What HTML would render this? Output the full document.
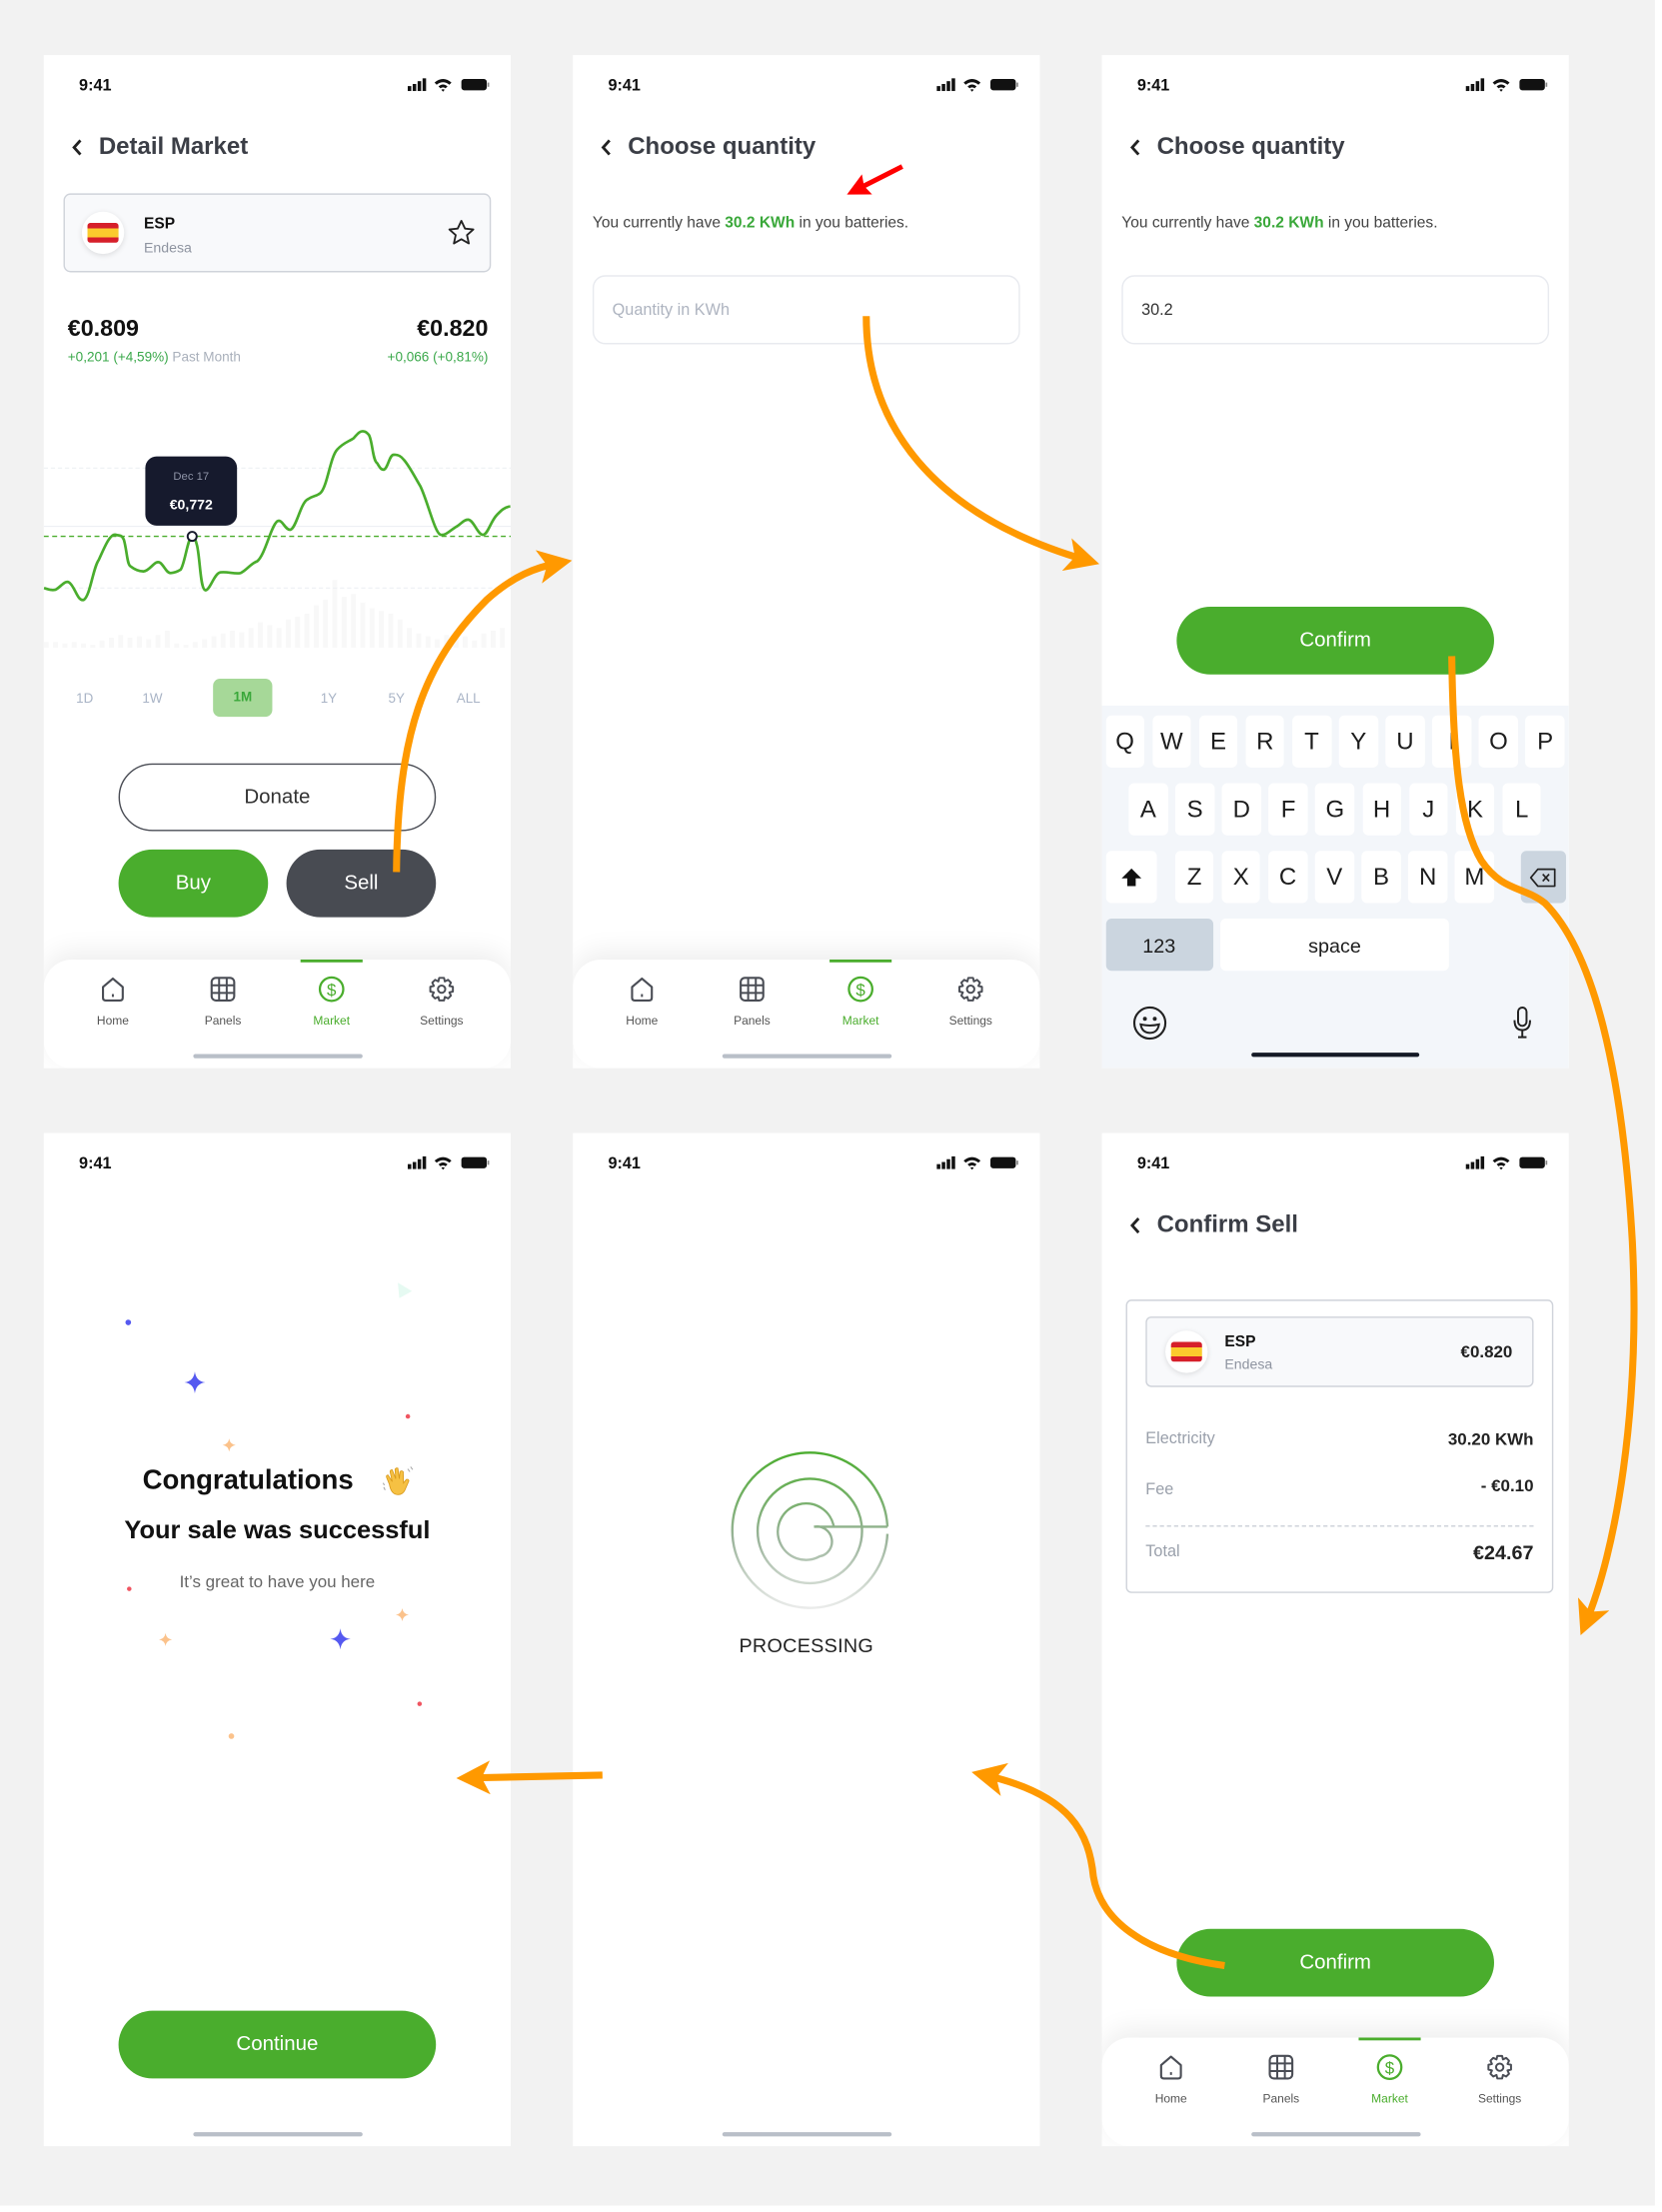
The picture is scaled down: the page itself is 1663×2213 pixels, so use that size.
<!DOCTYPE html>
<html><head><meta charset="utf-8">
<style>
*{box-sizing:border-box;margin:0;padding:0}
html,body{width:1663px;height:2213px;background:#fff;overflow:hidden}
#w{position:absolute;left:0;top:0;width:1178px;height:1567px;transform:scale(1.4117);transform-origin:0 0;font-family:"Liberation Sans",sans-serif}
#bg{position:absolute;left:0;top:0;width:1173px;height:1563px;background:#f2f2f2}
.ph{position:absolute;width:331px;height:718px;background:#fff;overflow:hidden}
.a{position:absolute}
.time{position:absolute;left:25px;top:15.5px;font-size:11.5px;font-weight:bold;color:#111}
.sb{position:absolute;left:256px;top:15px}
.hd{position:absolute;left:19px;top:54px;height:22px;font-size:17px;font-weight:bold;color:#3b3e46;line-height:22px}
.hd svg{position:absolute;left:0;top:5px}
.hd span{position:absolute;left:20px;white-space:nowrap}
.nav{position:absolute;left:0;top:641px;width:331px;height:77px;background:#fff;border-radius:20px;box-shadow:0 -6px 18px rgba(0,0,0,.07)}
.nav .it{position:absolute;top:11px;width:60px;margin-left:-30px;text-align:center;font-size:8.5px;color:#555}
.nav .it svg{display:block;margin:0 auto 7px}
.nav .ab{position:absolute;left:182px;top:0;width:44px;height:2px;background:#4aad2d}
.hb{position:absolute;left:106px;width:120px;height:3px;border-radius:2px;background:#b9bfc8}
.btn{position:absolute;height:48px;border-radius:24px;background:#4aad2d;color:#fff;font-size:14.5px;text-align:center;line-height:48px}
.txt{position:absolute;left:14px;top:113px;font-size:11px;color:#444;white-space:nowrap}
.txt b{color:#3aa83a}
.inp{position:absolute;left:14px;top:156px;width:303px;height:49px;border:1px solid #e8eaef;border-radius:9px;font-size:11.5px;line-height:49px;padding-left:13px}
.k{position:absolute;height:37px;width:27.7px;background:#fff;border-radius:4px;text-align:center;line-height:38px;font-size:17px;color:#1c1c1c}
.flag{position:absolute;width:30px;height:30px;border-radius:50%;background:#fff;box-shadow:0 1px 4px rgba(0,0,0,.12)}
.flag i{position:absolute;left:4px;top:8px;width:22px;height:14px;border-radius:2px;background:linear-gradient(#d61f2a 0 27%,#fbcb2d 27% 73%,#d61f2a 73%)}
.tf{position:absolute;top:451px;font-size:9.5px;color:#a9b4c6;width:30px;margin-left:-15px;text-align:center}
</style></head><body>
<div id="w">
<div id="bg"></div>

<!-- PHONE 1 -->
<div class="ph" style="left:31px;top:39px">
 <div class="time">9:41</div>
 <svg class="sb" width="62" height="12" viewBox="0 0 62 12"><rect x="2" y="7" width="2.5" height="3.5" fill="#111"/><rect x="5.5" y="5.5" width="2.5" height="5" fill="#111"/><rect x="9" y="3.5" width="2.5" height="7" fill="#111"/><rect x="12.5" y="1.5" width="2.5" height="9" fill="#111"/><path d="M21,4.5 Q27,-0.5 33,4.5 L31.5,6 Q27,2.5 22.5,6Z M23.8,7.2 Q27,4.5 30.2,7.2 L28.8,8.6 Q27,7.2 25.2,8.6Z M27,11 L25.8,9.6 Q27,8.8 28.2,9.6Z" fill="#111"/><rect x="40" y="2" width="18" height="8" rx="2" fill="#111"/><rect x="58.5" y="4.5" width="1.2" height="3" fill="#888"/></svg>
 <div class="hd"><svg width="10" height="13" viewBox="0 0 10 13"><path d="M7,1.5 L2.5,6.5 L7,11.5" stroke="#222" stroke-width="2" fill="none"/></svg><span>Detail Market</span></div>
 <div class="a" style="left:14px;top:98px;width:303px;height:56px;background:#f8f9fb;border:1px solid #cfd3da;border-radius:5px">
  <div class="flag" style="left:12px;top:12px"><i></i></div>
  <div class="a" style="left:56px;top:15px;font-size:11px;font-weight:bold;color:#111">ESP</div>
  <div class="a" style="left:56px;top:33px;font-size:10px;color:#8e94a0">Endesa</div>
  <svg class="a" style="left:271px;top:17px" width="20" height="20" viewBox="0 0 20 20"><path d="M10,1.5 L12.6,7 L18.5,7.6 L14,11.6 L15.3,17.5 L10,14.5 L4.7,17.5 L6,11.6 L1.5,7.6 L7.4,7Z" fill="none" stroke="#222" stroke-width="1.3" stroke-linejoin="round"/></svg>
 </div>
 <div class="a" style="left:17px;top:185px;font-size:16.5px;font-weight:bold;color:#111">€0.809</div>
 <div class="a" style="right:16px;top:185px;font-size:16.5px;font-weight:bold;color:#111">€0.820</div>
 <div class="a" style="left:17px;top:209px;font-size:9.6px;color:#3aa84a;white-space:nowrap">+0,201 (+4,59%) <span style="color:#a9b0bb">Past Month</span></div>
 <div class="a" style="right:16px;top:209px;font-size:9.6px;color:#3aa84a">+0,066 (+0,81%)</div>
 <div class="tf" style="left:29px">1D</div>
 <div class="tf" style="left:77px">1W</div>
 <div class="a" style="left:120px;top:442px;width:42px;height:27px;border-radius:5px;background:#a6d898;color:#3aa83a;font-size:9.5px;font-weight:bold;text-align:center;line-height:27px">1M</div>
 <div class="tf" style="left:202px">1Y</div>
 <div class="tf" style="left:250px">5Y</div>
 <div class="tf" style="left:301px">ALL</div>
 <div class="a" style="left:53px;top:502px;width:225px;height:48px;border:1px solid #4a4d55;border-radius:24px;text-align:center;line-height:46px;font-size:14.5px;color:#333">Donate</div>
 <div class="btn" style="left:53px;top:563px;width:106px">Buy</div>
 <div class="btn" style="left:172px;top:563px;width:106px;background:#484b52">Sell</div>
 <div class="nav"><div class="ab"></div>
  <div class="it" style="left:49px"><svg width="20" height="20" viewBox="0 0 20 20"><path d="M3,8.5 L10,2.5 L17,8.5 V16 Q17,18 15,18 H5 Q3,18 3,16Z" fill="none" stroke="#4a4d55" stroke-width="1.5" stroke-linejoin="round"/><path d="M10,13.5 V15.5" stroke="#4a4d55" stroke-width="1.4"/></svg>Home</div>
  <div class="it" style="left:127px"><svg width="20" height="20" viewBox="0 0 20 20"><rect x="2" y="2" width="16" height="16" rx="3" fill="none" stroke="#4a4d55" stroke-width="1.5"/><path d="M7.3,2V18M12.7,2V18M2,7.3H18M2,12.7H18" stroke="#4a4d55" stroke-width="1.4"/></svg>Panels</div>
  <div class="it" style="left:204px;color:#4aad2d"><svg width="20" height="20" viewBox="0 0 20 20"><circle cx="10" cy="10" r="8.3" fill="none" stroke="#4aad2d" stroke-width="1.6"/><text x="10" y="14.5" font-size="12" text-anchor="middle" fill="#4aad2d" font-family="Liberation Sans">$</text></svg>Market</div>
  <div class="it" style="left:282px"><svg width="20" height="20" viewBox="0 0 20 20"><path d="M8.3,2 H11.7 L12.3,4.5 L14.6,3.4 L16.6,5.4 L15.5,7.7 L18,8.3 V11.7 L15.5,12.3 L16.6,14.6 L14.6,16.6 L12.3,15.5 L11.7,18 H8.3 L7.7,15.5 L5.4,16.6 L3.4,14.6 L4.5,12.3 L2,11.7 V8.3 L4.5,7.7 L3.4,5.4 L5.4,3.4 L7.7,4.5Z" fill="none" stroke="#4a4d55" stroke-width="1.4" stroke-linejoin="round"/><circle cx="10" cy="10" r="2.6" fill="none" stroke="#4a4d55" stroke-width="1.4"/></svg>Settings</div>
  <div class="hb" style="top:67px"></div>
 </div>
</div>

<!-- PHONE 2 -->
<div class="ph" style="left:406px;top:39px">
 <div class="time">9:41</div>
 <svg class="sb" width="62" height="12" viewBox="0 0 62 12"><rect x="2" y="7" width="2.5" height="3.5" fill="#111"/><rect x="5.5" y="5.5" width="2.5" height="5" fill="#111"/><rect x="9" y="3.5" width="2.5" height="7" fill="#111"/><rect x="12.5" y="1.5" width="2.5" height="9" fill="#111"/><path d="M21,4.5 Q27,-0.5 33,4.5 L31.5,6 Q27,2.5 22.5,6Z M23.8,7.2 Q27,4.5 30.2,7.2 L28.8,8.6 Q27,7.2 25.2,8.6Z M27,11 L25.8,9.6 Q27,8.8 28.2,9.6Z" fill="#111"/><rect x="40" y="2" width="18" height="8" rx="2" fill="#111"/><rect x="58.5" y="4.5" width="1.2" height="3" fill="#888"/></svg>
 <div class="hd"><svg width="10" height="13" viewBox="0 0 10 13"><path d="M7,1.5 L2.5,6.5 L7,11.5" stroke="#222" stroke-width="2" fill="none"/></svg><span>Choose quantity</span></div>
 <div class="txt">You currently have <b>30.2 KWh</b> in you batteries.</div>
 <div class="inp" style="color:#aeb4c0">Quantity in KWh</div>
 <div class="nav"><div class="ab"></div>
  <div class="it" style="left:49px"><svg width="20" height="20" viewBox="0 0 20 20"><path d="M3,8.5 L10,2.5 L17,8.5 V16 Q17,18 15,18 H5 Q3,18 3,16Z" fill="none" stroke="#4a4d55" stroke-width="1.5" stroke-linejoin="round"/><path d="M10,13.5 V15.5" stroke="#4a4d55" stroke-width="1.4"/></svg>Home</div>
  <div class="it" style="left:127px"><svg width="20" height="20" viewBox="0 0 20 20"><rect x="2" y="2" width="16" height="16" rx="3" fill="none" stroke="#4a4d55" stroke-width="1.5"/><path d="M7.3,2V18M12.7,2V18M2,7.3H18M2,12.7H18" stroke="#4a4d55" stroke-width="1.4"/></svg>Panels</div>
  <div class="it" style="left:204px;color:#4aad2d"><svg width="20" height="20" viewBox="0 0 20 20"><circle cx="10" cy="10" r="8.3" fill="none" stroke="#4aad2d" stroke-width="1.6"/><text x="10" y="14.5" font-size="12" text-anchor="middle" fill="#4aad2d" font-family="Liberation Sans">$</text></svg>Market</div>
  <div class="it" style="left:282px"><svg width="20" height="20" viewBox="0 0 20 20"><path d="M8.3,2 H11.7 L12.3,4.5 L14.6,3.4 L16.6,5.4 L15.5,7.7 L18,8.3 V11.7 L15.5,12.3 L16.6,14.6 L14.6,16.6 L12.3,15.5 L11.7,18 H8.3 L7.7,15.5 L5.4,16.6 L3.4,14.6 L4.5,12.3 L2,11.7 V8.3 L4.5,7.7 L3.4,5.4 L5.4,3.4 L7.7,4.5Z" fill="none" stroke="#4a4d55" stroke-width="1.4" stroke-linejoin="round"/><circle cx="10" cy="10" r="2.6" fill="none" stroke="#4a4d55" stroke-width="1.4"/></svg>Settings</div>
  <div class="hb" style="top:67px"></div>
 </div>
</div>

<!-- PHONE 3 -->
<div class="ph" style="left:781px;top:39px">
 <div class="time">9:41</div>
 <svg class="sb" width="62" height="12" viewBox="0 0 62 12"><rect x="2" y="7" width="2.5" height="3.5" fill="#111"/><rect x="5.5" y="5.5" width="2.5" height="5" fill="#111"/><rect x="9" y="3.5" width="2.5" height="7" fill="#111"/><rect x="12.5" y="1.5" width="2.5" height="9" fill="#111"/><path d="M21,4.5 Q27,-0.5 33,4.5 L31.5,6 Q27,2.5 22.5,6Z M23.8,7.2 Q27,4.5 30.2,7.2 L28.8,8.6 Q27,7.2 25.2,8.6Z M27,11 L25.8,9.6 Q27,8.8 28.2,9.6Z" fill="#111"/><rect x="40" y="2" width="18" height="8" rx="2" fill="#111"/><rect x="58.5" y="4.5" width="1.2" height="3" fill="#888"/></svg>
 <div class="hd"><svg width="10" height="13" viewBox="0 0 10 13"><path d="M7,1.5 L2.5,6.5 L7,11.5" stroke="#222" stroke-width="2" fill="none"/></svg><span>Choose quantity</span></div>
 <div class="txt">You currently have <b>30.2 KWh</b> in you batteries.</div>
 <div class="inp" style="color:#333">30.2</div>
 <div class="btn" style="left:53px;top:391px;width:225px">Confirm</div>
 <div class="a" style="left:0;top:461px;width:331px;height:257px;background:#f3f6fa">
  <div class="k" style="left:2.5px;top:7px">Q</div><div class="k" style="left:35.6px;top:7px">W</div><div class="k" style="left:68.7px;top:7px">E</div><div class="k" style="left:101.8px;top:7px">R</div><div class="k" style="left:134.9px;top:7px">T</div><div class="k" style="left:168px;top:7px">Y</div><div class="k" style="left:201.1px;top:7px">U</div><div class="k" style="left:234.2px;top:7px">I</div><div class="k" style="left:267.3px;top:7px">O</div><div class="k" style="left:300.4px;top:7px">P</div>
  <div class="k" style="left:19px;top:55px">A</div><div class="k" style="left:52.1px;top:55px">S</div><div class="k" style="left:85.2px;top:55px">D</div><div class="k" style="left:118.3px;top:55px">F</div><div class="k" style="left:151.4px;top:55px">G</div><div class="k" style="left:184.5px;top:55px">H</div><div class="k" style="left:217.6px;top:55px">J</div><div class="k" style="left:250.7px;top:55px">K</div><div class="k" style="left:283.8px;top:55px">L</div>
  <div class="k" style="left:2.5px;top:103px;width:36.5px"><svg width="16" height="16" viewBox="0 0 16 16" style="margin-top:11px"><path d="M8,1.5 L15,8.5 H11 V14 H5 V8.5 H1Z" fill="#111"/></svg></div>
  <div class="k" style="left:51.7px;top:103px">Z</div><div class="k" style="left:84.8px;top:103px">X</div><div class="k" style="left:117.9px;top:103px">C</div><div class="k" style="left:151px;top:103px">V</div><div class="k" style="left:184.1px;top:103px">B</div><div class="k" style="left:217.2px;top:103px">N</div><div class="k" style="left:250.3px;top:103px">M</div>
  <div class="k" style="left:296.5px;top:103px;width:32.5px;background:#cbd5df"><svg width="20" height="14" viewBox="0 0 20 14" style="margin-top:12px"><path d="M6,1 H18 V13 H6 L1,7Z" fill="none" stroke="#222" stroke-width="1.2" stroke-linejoin="round"/><path d="M9.5,4.5 L14,9.5 M14,4.5 L9.5,9.5" stroke="#222" stroke-width="1.2"/></svg></div>
  <div class="k" style="left:2.5px;top:151px;width:76px;background:#cbd5df;font-size:14px">123</div>
  <div class="k" style="left:84px;top:151px;width:162px;font-size:14px">space</div>
  <svg class="a" style="left:21px;top:212px" width="26" height="26" viewBox="0 0 26 26"><circle cx="13" cy="13" r="11" fill="none" stroke="#222" stroke-width="1.5"/><circle cx="9.5" cy="10" r="1.4" fill="#222"/><circle cx="16.5" cy="10" r="1.4" fill="#222"/><path d="M6.5,14 Q13,15.5 19.5,14 Q18.5,20 13,20 Q7.5,20 6.5,14Z" fill="none" stroke="#222" stroke-width="1.4"/></svg>
  <svg class="a" style="left:290px;top:212px" width="16" height="26" viewBox="0 0 16 26"><rect x="5" y="2" width="6" height="13" rx="3" fill="none" stroke="#222" stroke-width="1.4"/><path d="M2.5,11 Q2.5,18 8,18 Q13.5,18 13.5,11 M8,18 V23 M5,23 H11" fill="none" stroke="#222" stroke-width="1.4"/></svg>
  <div class="a" style="left:106px;top:246px;width:119px;height:3px;border-radius:2px;background:#151a26"></div>
 </div>
</div>

<!-- PHONE 4 -->
<div class="ph" style="left:31px;top:803px">
 <div class="time">9:41</div>
 <svg class="sb" width="62" height="12" viewBox="0 0 62 12"><rect x="2" y="7" width="2.5" height="3.5" fill="#111"/><rect x="5.5" y="5.5" width="2.5" height="5" fill="#111"/><rect x="9" y="3.5" width="2.5" height="7" fill="#111"/><rect x="12.5" y="1.5" width="2.5" height="9" fill="#111"/><path d="M21,4.5 Q27,-0.5 33,4.5 L31.5,6 Q27,2.5 22.5,6Z M23.8,7.2 Q27,4.5 30.2,7.2 L28.8,8.6 Q27,7.2 25.2,8.6Z M27,11 L25.8,9.6 Q27,8.8 28.2,9.6Z" fill="#111"/><rect x="40" y="2" width="18" height="8" rx="2" fill="#111"/><rect x="58.5" y="4.5" width="1.2" height="3" fill="#888"/></svg>
 <div class="a" style="left:70px;top:235px;font-size:19.5px;font-weight:bold;color:#111;white-space:nowrap">Congratulations</div>
 <svg class="a" style="left:239px;top:235px" width="24" height="24" viewBox="0 0 24 24"><path d="M6,14 L4,9 Q3.5,7.5 5,7.3 L8,12 L6.5,5 Q6.5,3.5 8,3.7 L10.5,10 L10,3.5 Q10.5,2 12,2.5 L13,10 L13.5,5 Q14.5,3.8 15.8,5 L16,13 L18,10.5 Q19.5,10 19.8,11.5 L17,18 Q15,22 10.5,21 Q7,20 6,14Z" fill="#f6c143" stroke="#d99a1c" stroke-width=".6"/><path d="M2,16 L3,18 M1.5,13 L2.5,14.5 M19,3 L20.5,5 M21,1.5 L22.5,3.5" stroke="#aaa" stroke-width=".8"/></svg>
 <div class="a" style="left:0;top:271px;width:331px;text-align:center;font-size:18px;font-weight:bold;color:#111;white-space:nowrap">Your sale was successful</div>
 <div class="a" style="left:0;top:311px;width:331px;text-align:center;font-size:12px;color:#666">It’s great to have you here</div>
 <div class="btn" style="left:53px;top:622px;width:225px">Continue</div>
 <div class="hb" style="top:708px"></div>
</div>

<!-- PHONE 5 -->
<div class="ph" style="left:406px;top:803px">
 <div class="time">9:41</div>
 <svg class="sb" width="62" height="12" viewBox="0 0 62 12"><rect x="2" y="7" width="2.5" height="3.5" fill="#111"/><rect x="5.5" y="5.5" width="2.5" height="5" fill="#111"/><rect x="9" y="3.5" width="2.5" height="7" fill="#111"/><rect x="12.5" y="1.5" width="2.5" height="9" fill="#111"/><path d="M21,4.5 Q27,-0.5 33,4.5 L31.5,6 Q27,2.5 22.5,6Z M23.8,7.2 Q27,4.5 30.2,7.2 L28.8,8.6 Q27,7.2 25.2,8.6Z M27,11 L25.8,9.6 Q27,8.8 28.2,9.6Z" fill="#111"/><rect x="40" y="2" width="18" height="8" rx="2" fill="#111"/><rect x="58.5" y="4.5" width="1.2" height="3" fill="#888"/></svg>
 <div class="a" style="left:0;top:355px;width:331px;text-align:center;font-size:14px;color:#222;letter-spacing:.2px">PROCESSING</div>
 <div class="hb" style="top:708px"></div>
</div>

<!-- PHONE 6 -->
<div class="ph" style="left:781px;top:803px">
 <div class="time">9:41</div>
 <svg class="sb" width="62" height="12" viewBox="0 0 62 12"><rect x="2" y="7" width="2.5" height="3.5" fill="#111"/><rect x="5.5" y="5.5" width="2.5" height="5" fill="#111"/><rect x="9" y="3.5" width="2.5" height="7" fill="#111"/><rect x="12.5" y="1.5" width="2.5" height="9" fill="#111"/><path d="M21,4.5 Q27,-0.5 33,4.5 L31.5,6 Q27,2.5 22.5,6Z M23.8,7.2 Q27,4.5 30.2,7.2 L28.8,8.6 Q27,7.2 25.2,8.6Z M27,11 L25.8,9.6 Q27,8.8 28.2,9.6Z" fill="#111"/><rect x="40" y="2" width="18" height="8" rx="2" fill="#111"/><rect x="58.5" y="4.5" width="1.2" height="3" fill="#888"/></svg>
 <div class="hd"><svg width="10" height="13" viewBox="0 0 10 13"><path d="M7,1.5 L2.5,6.5 L7,11.5" stroke="#222" stroke-width="2" fill="none"/></svg><span>Confirm Sell</span></div>
 <div class="a" style="left:17px;top:118px;width:303px;height:208px;border:1px solid #cfd3da;border-radius:4px">
  <div class="a" style="left:13px;top:11px;width:275px;height:50px;background:#f8f9fb;border:1px solid #cfd3da;border-radius:4px">
   <div class="flag" style="left:13px;top:9px"><i></i></div>
   <div class="a" style="left:55px;top:11px;font-size:11px;font-weight:bold;color:#111">ESP</div>
   <div class="a" style="left:55px;top:28px;font-size:10px;color:#8e94a0">Endesa</div>
   <div class="a" style="right:14px;top:17px;font-size:12px;font-weight:bold;color:#222">€0.820</div>
  </div>
  <div class="a" style="left:13px;top:92px;font-size:11.5px;color:#9aa0ab">Electricity</div>
  <div class="a" style="right:13px;top:91px;font-size:12px;font-weight:bold;color:#222">30.20 KWh</div>
  <div class="a" style="left:13px;top:128px;font-size:11.5px;color:#9aa0ab">Fee</div>
  <div class="a" style="right:13px;top:124px;font-size:12px;font-weight:bold;color:#222">- €0.10</div>
  <div class="a" style="left:13px;top:159px;width:275px;border-top:1px dashed #cfd3da"></div>
  <div class="a" style="left:13px;top:172px;font-size:11.5px;color:#9aa0ab">Total</div>
  <div class="a" style="right:13px;top:170px;font-size:14px;font-weight:bold;color:#222">€24.67</div>
 </div>
 <div class="btn" style="left:53px;top:564px;width:225px">Confirm</div>
 <div class="nav"><div class="ab"></div>
  <div class="it" style="left:49px"><svg width="20" height="20" viewBox="0 0 20 20"><path d="M3,8.5 L10,2.5 L17,8.5 V16 Q17,18 15,18 H5 Q3,18 3,16Z" fill="none" stroke="#4a4d55" stroke-width="1.5" stroke-linejoin="round"/><path d="M10,13.5 V15.5" stroke="#4a4d55" stroke-width="1.4"/></svg>Home</div>
  <div class="it" style="left:127px"><svg width="20" height="20" viewBox="0 0 20 20"><rect x="2" y="2" width="16" height="16" rx="3" fill="none" stroke="#4a4d55" stroke-width="1.5"/><path d="M7.3,2V18M12.7,2V18M2,7.3H18M2,12.7H18" stroke="#4a4d55" stroke-width="1.4"/></svg>Panels</div>
  <div class="it" style="left:204px;color:#4aad2d"><svg width="20" height="20" viewBox="0 0 20 20"><circle cx="10" cy="10" r="8.3" fill="none" stroke="#4aad2d" stroke-width="1.6"/><text x="10" y="14.5" font-size="12" text-anchor="middle" fill="#4aad2d" font-family="Liberation Sans">$</text></svg>Market</div>
  <div class="it" style="left:282px"><svg width="20" height="20" viewBox="0 0 20 20"><path d="M8.3,2 H11.7 L12.3,4.5 L14.6,3.4 L16.6,5.4 L15.5,7.7 L18,8.3 V11.7 L15.5,12.3 L16.6,14.6 L14.6,16.6 L12.3,15.5 L11.7,18 H8.3 L7.7,15.5 L5.4,16.6 L3.4,14.6 L4.5,12.3 L2,11.7 V8.3 L4.5,7.7 L3.4,5.4 L5.4,3.4 L7.7,4.5Z" fill="none" stroke="#4a4d55" stroke-width="1.4" stroke-linejoin="round"/><circle cx="10" cy="10" r="2.6" fill="none" stroke="#4a4d55" stroke-width="1.4"/></svg>Settings</div>
  <div class="hb" style="top:67px"></div>
 </div>
</div>

<!-- OVERLAY -->
<svg class="a" style="left:0;top:0" width="1178" height="1567" viewBox="0 0 1178 1567">
 <defs>
  <marker id="ao" viewBox="0 0 10 10" refX="6" refY="5" markerWidth="24" markerHeight="24" markerUnits="userSpaceOnUse" orient="auto"><path d="M0,0 L10,5 L0,10 L2.5,5Z" fill="#ff9900"/></marker>
  <marker id="ar" viewBox="0 0 10 10" refX="6" refY="5" markerWidth="16" markerHeight="16" markerUnits="userSpaceOnUse" orient="auto"><path d="M0,0 L10,5 L0,10 L1.5,5Z" fill="#f00"/></marker>
  <linearGradient id="sg" gradientUnits="userSpaceOnUse" x1="0" y1="1028" x2="0" y2="1142"><stop offset="0" stop-color="#4aad2d"/><stop offset=".55" stop-color="#9ab39a"/><stop offset="1" stop-color="#eeeeee"/></linearGradient>
  <clipPath id="c1"><rect x="31" y="250" width="331" height="220"/></clipPath>
 </defs>
 <g clip-path="url(#c1)">
  <g fill="#f8f8f8">
   <rect x="31" y="455" width="3.5" height="4"/><rect x="37.6" y="455" width="3.5" height="4"/><rect x="44.2" y="456" width="3.5" height="3"/><rect x="50.8" y="455" width="3.5" height="4"/><rect x="57.4" y="456" width="3.5" height="3"/><rect x="64" y="457" width="3.5" height="2"/><rect x="70.6" y="454" width="3.5" height="5"/><rect x="77.2" y="452" width="3.5" height="7"/><rect x="83.8" y="450" width="3.5" height="9"/><rect x="90.4" y="452" width="3.5" height="7"/><rect x="97" y="451" width="3.5" height="8"/><rect x="103.6" y="453" width="3.5" height="6"/><rect x="110.2" y="450" width="3.5" height="9"/><rect x="116.8" y="447" width="3.5" height="12"/><rect x="123.4" y="456" width="3.5" height="3"/><rect x="130" y="457" width="3.5" height="2"/><rect x="136.6" y="455" width="3.5" height="4"/><rect x="143.2" y="453" width="3.5" height="6"/><rect x="149.8" y="451" width="3.5" height="8"/><rect x="156.4" y="449" width="3.5" height="10"/><rect x="163" y="447" width="3.5" height="12"/><rect x="169.6" y="448" width="3.5" height="11"/><rect x="176.2" y="445" width="3.5" height="14"/><rect x="182.8" y="441" width="3.5" height="18"/><rect x="189.4" y="443" width="3.5" height="16"/><rect x="196" y="445" width="3.5" height="14"/><rect x="202.6" y="439" width="3.5" height="20"/><rect x="209.2" y="437" width="3.5" height="22"/><rect x="215.8" y="435" width="3.5" height="24"/><rect x="222.4" y="429" width="3.5" height="30"/><rect x="229" y="425" width="3.5" height="34"/><rect x="235.6" y="411" width="3.5" height="48"/><rect x="242.2" y="423" width="3.5" height="36"/><rect x="248.8" y="421" width="3.5" height="38"/><rect x="255.4" y="427" width="3.5" height="32"/><rect x="262" y="431" width="3.5" height="28"/><rect x="268.6" y="433" width="3.5" height="26"/><rect x="275.2" y="435" width="3.5" height="24"/><rect x="281.8" y="439" width="3.5" height="20"/><rect x="288.4" y="445" width="3.5" height="14"/><rect x="295" y="449" width="3.5" height="10"/><rect x="301.6" y="451" width="3.5" height="8"/><rect x="308.2" y="453" width="3.5" height="6"/><rect x="314.8" y="450" width="3.5" height="9"/><rect x="321.4" y="447" width="3.5" height="12"/><rect x="328" y="451" width="3.5" height="8"/><rect x="334.6" y="454" width="3.5" height="5"/><rect x="341.2" y="449" width="3.5" height="10"/><rect x="347.8" y="447" width="3.5" height="12"/><rect x="354.4" y="445" width="3.5" height="14"/>
  </g>
  <path d="M31,331.7H362M31,416.7H362" stroke="#edf0f4" stroke-width=".8" stroke-dasharray="3 2"/>
  <path d="M31,373H362" stroke="#edf0f4" stroke-width=".8"/>
  <path d="M31,380.1H362" stroke="#4aad2d" stroke-width="1" stroke-dasharray="3.5 2.5"/>
  <path d="M31.2,416.7 C35,418 37,418.5 39.4,417.9 C43,416 46,411 48.9,412.7 C53,415 55,427 59.5,425 C64,422 66,402 70.1,396.6 C74,388 78,378 81.9,378.9 C86,380 86,379 87.8,382.5 C90,390 90,400 92.5,401.3 C96,404 99,405 102,404.9 C107,404 110,396 113.8,399 C117,402 118,406 120.9,406.1 C124,406 126,405 128,403.7 C131,400 133,381 136.2,380.1 C138,380 138.5,382 139.8,387.2 C142,398 142,418 145.7,418.3 C149,418 152,406 156.3,405.6 C162,405 166,407 170.5,406.1 C175,404 178,399 182.3,397.8 C188,393 192,373 196.4,369.5 C200,367 202,376 205.9,375.4 C210,374 213,357 217.7,354.1 C222,351 224,352 227.1,349.4 C232,345 234,324 238.9,318.7 C243,314 247,313 250.7,310.5 C253,308 255,305 257.8,305.7 C260,306 260,307 261.4,308.1 C264,312 264,326 267.3,328.2 C269,331 270,333 272,332.9 C275,332 276,322 279.1,322.3 C282,322 284,323 286.2,325.8 C290,330 294,338 298,344.7 C303,355 308,377 312.1,378.9 C316,380 320,375 323.9,373 C327,371 329,368 332.2,368.3 C336,369 339,380 342.8,378.9 C346,378 348,369 352.3,364.8 C355,362 358,359 361.7,358.9" fill="none" stroke="#4aad2d" stroke-width="1.9" stroke-linejoin="round"/>
  <rect x="103" y="323.5" width="65" height="49" rx="8" fill="#161a2d"/>
  <text x="135.5" y="340" font-size="8" fill="#8e93a6" text-anchor="middle" font-family="Liberation Sans">Dec 17</text>
  <text x="135.5" y="361" font-size="10" font-weight="bold" fill="#fff" text-anchor="middle" font-family="Liberation Sans">€0,772</text>
  <circle cx="136.2" cy="380.1" r="3.2" fill="#fff" stroke="#161a2d" stroke-width="1.4"/>
 </g>
 <!-- spiral -->
 <g fill="none" stroke="url(#sg)" stroke-width="1.7">
  <path d="M629,1082 A55,55 0 1 0 629,1087"/>
  <circle cx="574" cy="1085" r="37"/>
  <path d="M591,1082 A20,20 0 1 0 581,1103 A9,9 0 0 0 577,1082 H629"/>
 </g>
 <!-- confetti -->
 <circle cx="90.9" cy="937.2" r="2" fill="#5559f0"/>
 <path d="M138.1,972 Q139,979 145.5,979.7 Q139,980.5 138.1,987.5 Q137.2,980.5 130.7,979.7 Q137.2,979 138.1,972Z" fill="#5559f0"/>
 <path d="M241.2,1154 Q242,1161 248.5,1161.5 Q242,1162 241.2,1169 Q240.4,1162 234,1161.5 Q240.4,1161 241.2,1154Z" fill="#5559f0"/>
 <path d="M282,909 L292,915 L283,920Z" fill="#e6faf2"/>
 <circle cx="289.1" cy="1003.8" r="1.6" fill="#f05561"/>
 <circle cx="91.6" cy="1126" r="1.6" fill="#f05561"/>
 <circle cx="297.4" cy="1207.5" r="1.6" fill="#f05561"/>
 <circle cx="164" cy="1230.4" r="2" fill="#fbc28b"/>
 <path d="M162.4,1019.5 Q163,1023.5 167,1024.1 Q163,1024.7 162.4,1028.7 Q161.8,1024.7 157.8,1024.1 Q161.8,1023.5 162.4,1019.5Z" fill="#fbc28b"/>
 <path d="M285.1,1139.8 Q285.7,1143.8 289.7,1144.4 Q285.7,1145 285.1,1149 Q284.5,1145 280.5,1144.4 Q284.5,1143.8 285.1,1139.8Z" fill="#fbc28b"/>
 <path d="M117.3,1157.4 Q117.9,1161.4 121.9,1162 Q117.9,1162.6 117.3,1166.6 Q116.7,1162.6 112.7,1162 Q116.7,1161.4 117.3,1157.4Z" fill="#fbc28b"/>
 <!-- arrows -->
 <g fill="none" stroke="#ff9900" stroke-width="5">
  <path d="M281,618 C282,520 300,470 345,425 C364,408 380,402 396,399" marker-end="url(#ao)"/>
  <path d="M614,224 C614,300 660,365 770,397" marker-end="url(#ao)"/>
  <path d="M1029,465 C1030,540 1035,585 1050,610 C1065,632 1080,628 1095,640 C1130,675 1150,760 1157,880 C1163,1000 1145,1100 1124,1150" marker-end="url(#ao)"/>
  <path d="M868,1393 C810,1385 780,1360 775,1330 C772,1300 760,1272 698,1258" marker-end="url(#ao)"/>
  <path d="M427,1258 L333,1260" marker-end="url(#ao)"/>
 </g>
 <path d="M639.5,118 L606,135" stroke="#f00" stroke-width="3.5" fill="none" marker-end="url(#ar)"/>
</svg>
</div>
</body></html>
